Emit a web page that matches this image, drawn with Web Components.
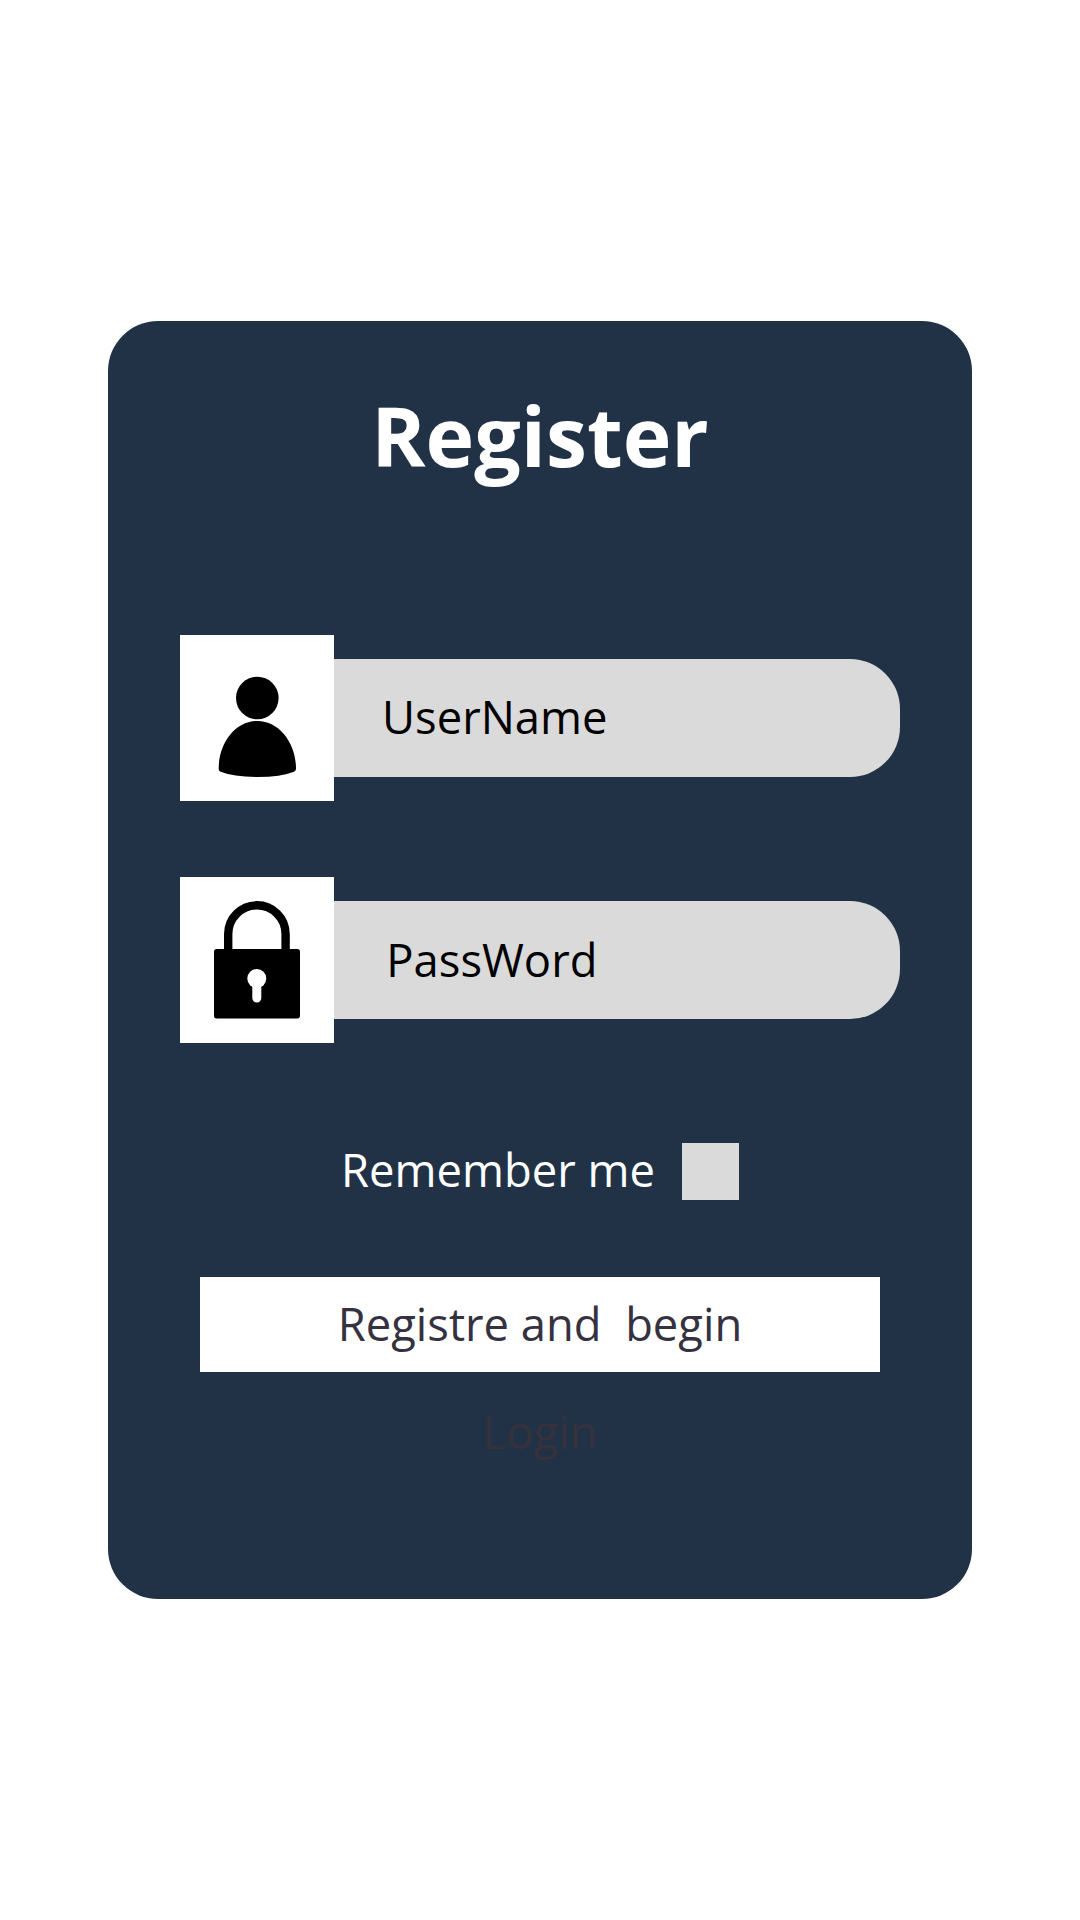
<!DOCTYPE html>
<html lang="en">
<head>
<meta charset="utf-8">
<title>Register</title>
<style>
body{margin:0;background:#fff;font-family:"Open Sans",sans-serif;}
</style>
</head>
<body>
<register-card>
  <span slot="title">Register</span>
  <icon-field style="--indent:48px;--line:115px"><user-icon slot="icon"></user-icon>UserName</icon-field>
  <icon-field style="--indent:52.3px;--line:117px"><lock-icon slot="icon"></lock-icon>PassWord</icon-field>
  <check-option slot="actions">Remember me</check-option>
  <submit-button slot="actions">Registre and&nbsp; begin</submit-button>
  <login-link slot="actions">Login</login-link>
</register-card>
<script>
const define = (name, html) => customElements.define(name, class extends HTMLElement {
  constructor() {
    super();
    this.attachShadow({ mode: 'open' }).innerHTML = html;
  }
});

define('register-card', `
<style>
:host{display:flex;justify-content:center;padding-top:321px;height:1920px;box-sizing:border-box}
.card{width:864px;height:1278px;box-sizing:border-box;padding-top:58px;border-radius:50px;background:#213247;display:flex;flex-direction:column}
h1{margin:0 0 144px;font-size:82.4px;line-height:112px;font-weight:700;color:#fff;text-align:center}
.fields{display:flex;flex-direction:column;gap:76px;padding:0 72px}
.actions{display:flex;flex-direction:column;align-items:center;margin-top:100px}
</style>
<div class="card">
  <h1><slot name="title"></slot></h1>
  <div class="fields"><slot></slot></div>
  <div class="actions"><slot name="actions"></slot></div>
</div>`);

define('icon-field', `
<style>
:host{display:flex;align-items:center;height:166px}
.icon{width:154px;height:166px;background:#fff;display:flex}
.input{flex:1;height:118px;box-sizing:border-box;padding-left:var(--indent);background:#dadada;border-radius:0 50px 50px 0;font-size:45.35px;line-height:var(--line);color:#000}
</style>
<div class="icon"><slot name="icon"></slot></div>
<div class="input"><slot></slot></div>`);

define('user-icon', `
<style>:host,svg{display:block}</style>
<svg width="154" height="166" viewBox="180 635 154 166">
  <circle cx="257.3" cy="698" r="21.3"/>
  <path d="M257.3 721C280 721 296 744 296 768.5Q296.2 770.8 294 771.8Q281 777 257.3 777Q233.6 777 220.6 771.8Q218.5 770.8 218.7 768.5C218.7 744 234.6 721 257.3 721Z"/>
</svg>`);

define('lock-icon', `
<style>:host,svg{display:block}</style>
<svg width="154" height="166" viewBox="180 877 154 166">
  <path d="M228.2 952V934a28.7 28.7 0 0 1 57.4 0V952" fill="none" stroke="#000" stroke-width="8.4"/>
  <rect x="214" y="949" width="86" height="69.5" rx="2.7"/>
  <circle cx="256.8" cy="978.5" r="9.5" fill="#fff"/>
  <path d="M256.8 980V998" stroke="#fff" stroke-width="9" stroke-linecap="round"/>
</svg>`);

define('check-option', `
<style>
:host{display:flex;align-items:flex-start;gap:27px;height:57px;font-size:45.35px;line-height:53px;color:#fff}
.box{width:57px;height:57px;background:#dadada}
</style>
<span class="label"><slot></slot></span><span class="box"></span>`);

define('submit-button', `
<style>
:host{display:flex;justify-content:center;width:680px;height:95px;margin-top:77px;background:#fff;font-size:45.35px;line-height:93px;color:#35313f}
</style>
<slot></slot>`);

define('login-link', `
<style>:host{display:block;margin-top:28px;font-size:45.35px;line-height:63px;color:#35313d}</style>
<slot></slot>`);
</script>
</body>
</html>
